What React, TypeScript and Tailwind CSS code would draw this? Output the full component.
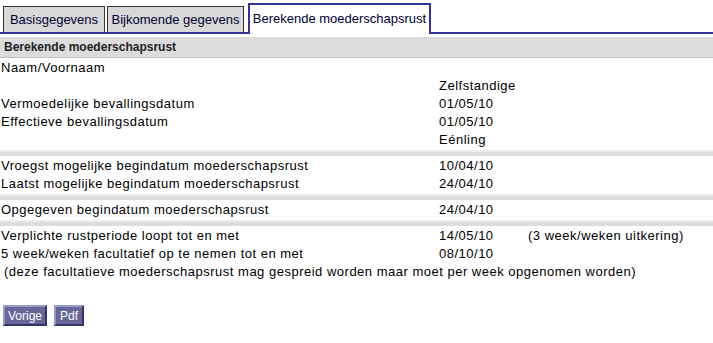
export default function App() {
  const font = { fontFamily: '"Liberation Sans", Arial, sans-serif' };
  const rows1 = [
    ["Naam/Voornaam", "", ""],
    ["", "Zelfstandige", ""],
    ["Vermoedelijke bevallingsdatum", "01/05/10", ""],
    ["Effectieve bevallingsdatum", "01/05/10", ""],
    ["", "Eénling", ""],
  ];
  const rows2 = [
    ["Vroegst mogelijke begindatum moederschapsrust", "10/04/10", ""],
    ["Laatst mogelijke begindatum moederschapsrust", "24/04/10", ""],
  ];
  const rows3 = [["Opgegeven begindatum moederschapsrust", "24/04/10", ""]];
  const rows4 = [
    ["Verplichte rustperiode loopt tot en met", "14/05/10", "(3 week/weken uitkering)"],
    ["5 week/weken facultatief op te nemen tot en met", "08/10/10", ""],
  ];

  const Rows = ({ rows }: { rows: string[][] }) => (
    <div>
      {rows.map((r, i) => (
        <div key={i} className="grid h-[18px] grid-cols-[439px_89px_1fr] items-center leading-[18px]">
          <span className="pl-[1px]">{r[0]}</span>
          <span>{r[1]}</span>
          <span>{r[2]}</span>
        </div>
      ))}
    </div>
  );

  const Sep = () => <div className="my-[1px] h-[6px] border-t-2 border-[#ececec] bg-[#dcdcdc]" />;

  return (
    <div className="h-[343px] w-[713px] bg-white text-[13px] tracking-[0.5px] text-black" style={font}>
      <div className="flex h-[34px] items-end gap-[2px] whitespace-nowrap border-b-2 border-[#333399] pl-[3px] tracking-normal">
        <div className="flex h-[26px] w-[102px] items-center justify-center border border-b-0 border-[#333333] bg-[#d8d8d8] text-[#000033]">
          Basisgegevens
        </div>
        <div className="flex h-[26px] w-[137px] items-center justify-center border border-b-0 border-[#333333] bg-[#d8d8d8] text-[#000033]">
          Bijkomende gegevens
        </div>
        <div className="-mb-[2px] ml-[2px] flex h-[31px] w-[183px] items-center justify-center border-2 border-b-0 border-[#333399] bg-white pb-[2px] text-[#000033]">
          Berekende moederschapsrust
        </div>
      </div>
      <div className="mt-[3px] flex h-[21px] items-center border-b border-[#c4c4c4] bg-[#dcdcdc] pl-[4px] text-[12px] font-bold tracking-normal text-[#222222]">
        Berekende moederschapsrust
      </div>
      <div className="mt-[1px]">
        <Rows rows={rows1} />
        <Sep />
        <Rows rows={rows2} />
        <Sep />
        <Rows rows={rows3} />
        <Sep />
        <Rows rows={rows4} />
        <div className="h-[18px] pl-[4px] leading-[18px]">
          (deze facultatieve moederschapsrust mag gespreid worden maar moet per week opgenomen worden)
        </div>
      </div>
      <div className="mt-[24px] flex gap-[7px] pl-[3px]">
        <button className="h-[21px] border-2 border-t-[#9999cc] border-l-[#9999cc] border-r-[#333366] border-b-[#333366] bg-[#666699] px-[3px] text-[12px] leading-none tracking-normal text-white">
          Vorige
        </button>
        <button className="h-[21px] border-2 border-t-[#9999cc] border-l-[#9999cc] border-r-[#333366] border-b-[#333366] bg-[#666699] px-[4px] text-[12px] leading-none tracking-normal text-white">
          Pdf
        </button>
      </div>
    </div>
  );
}
